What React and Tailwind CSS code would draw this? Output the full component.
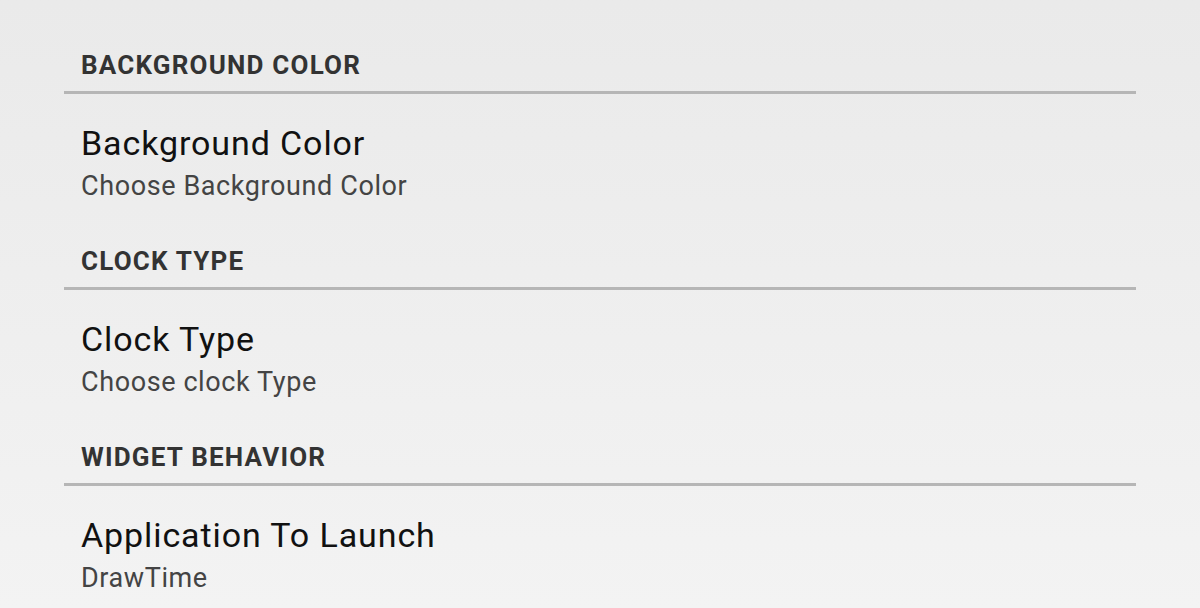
const sections = [
  { header: "BACKGROUND COLOR", title: "Background Color", summary: "Choose Background Color" },
  { header: "CLOCK TYPE", title: "Clock Type", summary: "Choose clock Type" },
  { header: "WIDGET BEHAVIOR", title: "Application To Launch", summary: "DrawTime" },
]

export default function App() {
  return (
    <div
      className="w-[1200px] h-[608px] overflow-hidden bg-gradient-to-b from-[#eaeaea] to-[#f3f3f3]"
      style={{ fontFamily: "Roboto, 'Noto Sans', sans-serif" }}
    >
      {sections.map((s) => (
        <div key={s.header} className="h-[196px]">
          <div className="h-[91px] pt-[50px] pl-[81px]">
            <div className="text-[26px] leading-[30px] font-bold tracking-[1.2px] text-[#333333]">{s.header}</div>
          </div>
          <div className="h-[3px] mx-[64px] bg-[#b6b6b6]" />
          <div className="h-[102px] pl-[81px] pt-[29px]">
            <div className="text-[34px] leading-[40px] tracking-[0.9px] text-[#111111]">{s.title}</div>
            <div className="mt-[9px] text-[27px] leading-[28px] tracking-[0.6px] text-[#444444]">{s.summary}</div>
          </div>
        </div>
      ))}
    </div>
  )
}
